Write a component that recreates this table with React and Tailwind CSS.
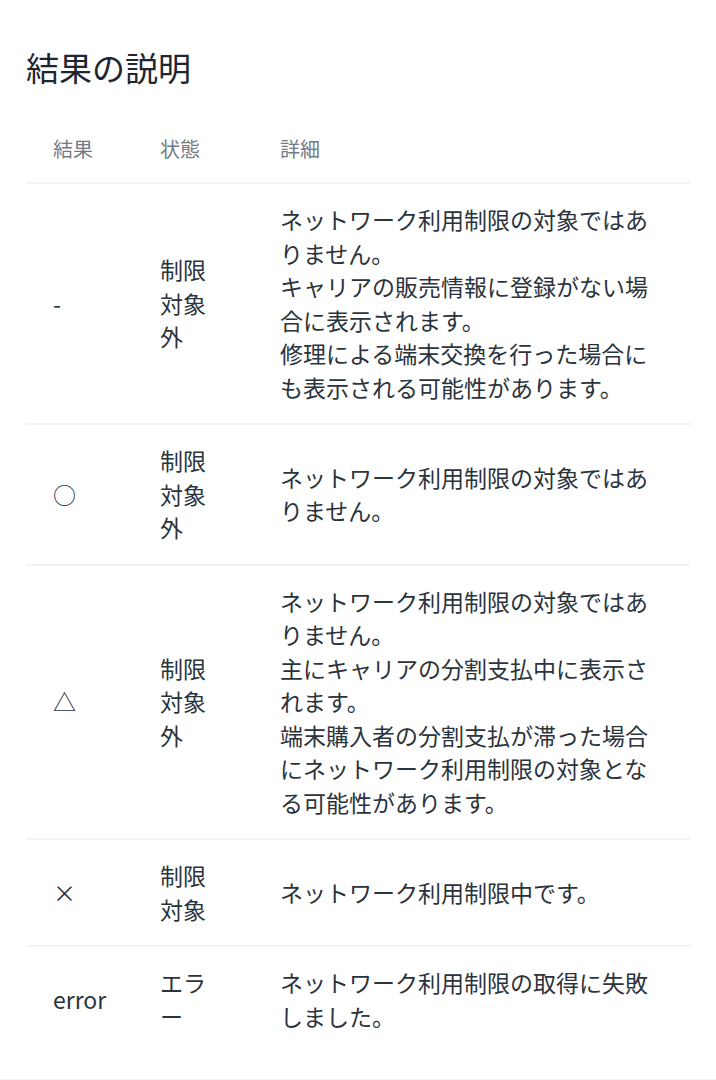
const rows = [
  {
    result: '-',
    status: '制限対象外',
    detail: [
      'ネットワーク利用制限の対象ではありません。',
      'キャリアの販売情報に登録がない場合に表示されます。',
      '修理による端末交換を行った場合にも表示される可能性があります。',
    ],
  },
  {
    result: '○',
    status: '制限対象外',
    detail: ['ネットワーク利用制限の対象ではありません。'],
  },
  {
    result: '△',
    status: '制限対象外',
    detail: [
      'ネットワーク利用制限の対象ではありません。',
      '主にキャリアの分割支払中に表示されます。',
      '端末購入者の分割支払が滞った場合にネットワーク利用制限の対象となる可能性があります。',
    ],
  },
  {
    result: '×',
    status: '制限対象',
    detail: ['ネットワーク利用制限中です。'],
  },
  {
    result: 'error',
    status: 'エラー',
    detail: ['ネットワーク利用制限の取得に失敗しました。'],
  },
]

export default function App() {
  return (
    <div
      className="min-h-screen bg-[#f3f3f3]"
      style={{ fontFamily: '"Noto Sans CJK JP", "Noto Sans", sans-serif' }}
    >
      <div className="bg-white px-[26px] pt-[44px] pb-[27px]">
        <h2 className="text-[33px] leading-[46px] font-normal text-[#1e2630] mb-[25px]">結果の説明</h2>

        <table className="w-full table-fixed border-collapse">
          <thead>
            <tr className="border-b-2 border-[#f2f3f4]">
              <th className="w-[107px] px-[27px] py-[19px] text-left text-[20px] leading-[29px] font-normal text-[#737b85]">結果</th>
              <th className="w-[120px] px-[27px] py-[19px] text-left text-[20px] leading-[29px] font-normal text-[#737b85]">状態</th>
              <th className="px-[27px] py-[19px] text-left text-[20px] leading-[29px] font-normal text-[#737b85]">詳細</th>
            </tr>
          </thead>
          <tbody>
            {rows.map((row, i) => (
              <tr key={i} className={i < rows.length - 1 ? 'border-b-2 border-[#f2f3f4]' : ''}>
                <td className="px-[27px] py-[19px] align-middle text-[23px] leading-[33.5px] text-[#2b333d]">
                  {row.result}
                </td>
                <td className="px-[27px] py-[19px] align-middle text-[23px] leading-[33.5px] text-[#2b333d]">
                  {row.status}
                </td>
                <td className="px-[27px] py-[19px] align-middle text-[23px] leading-[33.5px] text-[#2b333d]">
                  {row.detail.map((line, j) => (
                    <div key={j}>{line}</div>
                  ))}
                </td>
              </tr>
            ))}
          </tbody>
        </table>
      </div>
    </div>
  )
}
